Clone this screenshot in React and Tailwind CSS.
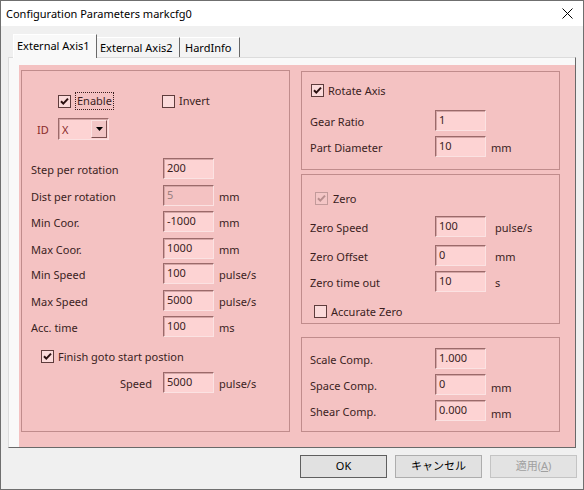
import React from "react";

const TXT = "text-[#3b1e1e]";

function Check({ checked, disabled }) {
  return (
    <span
      className={
        disabled
          ? "w-[13px] h-[13px] shrink-0 border border-[#c29a9a] bg-[#f4c6c6] flex items-center justify-center"
          : "w-[13px] h-[13px] shrink-0 border border-[#5e3c3c] bg-[#fbdada] flex items-center justify-center"
      }
    >
      {checked && (
        <svg width="11" height="11" viewBox="0 0 11 11">
          <path
            d="M2 5.2 L4.3 7.6 L9 2.6"
            stroke={disabled ? "#b88e8e" : "#2a1010"}
            strokeWidth="2"
            fill="none"
          />
        </svg>
      )}
    </span>
  );
}

function Field({ value, disabled }) {
  return (
    <div
      className={
        disabled
          ? "w-[51px] h-[21px] shrink-0 flex items-center pl-[3px] border border-t-[#9b6a6a] border-l-[#9b6a6a] border-r-[#fbe2e2] border-b-[#fbe2e2] shadow-[inset_1px_1px_0_#d4a5a5] bg-[#f4c2c2] text-[#9a7f7f]"
          : "w-[51px] h-[21px] shrink-0 flex items-center pl-[3px] border border-t-[#9b6a6a] border-l-[#9b6a6a] border-r-[#fbe2e2] border-b-[#fbe2e2] shadow-[inset_1px_1px_0_#d4a5a5] bg-[#fdd3d3] text-[#3b1e1e]"
      }
    >
      {value}
    </div>
  );
}

function Row({ label, value, unit, disabled, rowCls, labelCls, unitCls }) {
  return (
    <div className={rowCls}>
      <span className={labelCls}>{label}</span>
      <Field value={value} disabled={disabled} />
      {unit && <span className={unitCls}>{unit}</span>}
    </div>
  );
}

export default function App() {
  const leftRow = "flex items-center h-[21px] pl-[9px]";
  const leftLabel = "w-[132px] shrink-0 pt-[3px]";
  const leftUnit = "ml-[5px] pt-[3px]";
  const rightRow = "flex items-center h-[21px] pl-[8px]";
  const rightLabel = "w-[125px] shrink-0 pt-[3px]";
  return (
    <div className="w-[584px] h-[490px] border border-[#6f6f6f] bg-[#f0f0f0] flex flex-col overflow-hidden text-[11px] text-black font-['Noto_Sans','Noto_Sans_CJK_JP',sans-serif]">
      {/* Title bar */}
      <div className="h-[25px] shrink-0 bg-white flex items-center pl-[5px]">
        <span className="text-[11px] leading-none">Configuration Parameters markcfg0</span>
        <svg className="ml-auto mr-[10px]" width="11" height="11" viewBox="0 0 11 11">
          <path d="M0.5 0.5 L10.5 10.5 M10.5 0.5 L0.5 10.5" stroke="#000" strokeWidth="1" />
        </svg>
      </div>

      {/* Tab strip */}
      <div className="h-[31px] shrink-0 flex items-end pl-[12px] relative z-10">
        <div className="w-[84px] h-[24px] -mb-[1px] bg-[#f9f9f9] border-l border-t border-r border-l-white border-t-white border-r-[#696969] flex items-start pt-[5px] pl-[3px]">
          <span className="leading-none">External Axis1</span>
        </div>
        <div className="w-[83px] h-[20px] bg-[#f4f4f4] border-t border-r border-t-white border-r-[#696969] flex items-start pt-[4px] pl-[3px]">
          <span className="leading-none">External Axis2</span>
        </div>
        <div className="w-[60px] h-[20px] bg-[#f4f4f4] border-t border-r border-t-white border-r-[#696969] flex items-start pt-[4px] pl-[5px]">
          <span className="leading-none">HardInfo</span>
        </div>
      </div>

      {/* Tab panel */}
      <div className="ml-[7px] w-[568px] h-[391px] shrink-0 bg-[#f9f9f9] border border-t-[#dcdcdc] border-l-[#dcdcdc] border-r-[#696969] border-b-[#696969] pt-[7px] pl-[10px]">
        <div className={`w-[556px] h-[382px] bg-[#f4c2c2] flex items-start pt-[5px] pl-[2px] ${TXT}`}>
          {/* Left group */}
          <div className="w-[269px] h-[362px] shrink-0 border border-[#c08c8c] flex flex-col">
            <div className="mt-[20px] h-[20px] flex items-center pl-[36px]">
              <div className="w-[104px] shrink-0 flex items-center">
                <Check checked />
                <span className="ml-[4px] h-[18px] px-[1px] border border-dotted border-[#3b1e1e] flex items-center">
                  Enable
                </span>
              </div>
              <Check />
              <span className="ml-[4px]">Invert</span>
            </div>
            <div className="mt-[7px] h-[22px] flex items-center pl-[15px]">
              <span className="w-[21px] shrink-0 text-[#8a2a2a] pt-[3px]">ID</span>
              <div className="w-[51px] h-[22px] flex items-center border border-t-[#9b6a6a] border-l-[#9b6a6a] border-r-[#fbe2e2] border-b-[#fbe2e2] shadow-[inset_1px_1px_0_#d4a5a5] bg-[#fdd3d3] pl-[3px]">
                <span className="flex-1 text-[#8a2a2a] leading-none">X</span>
                <div className="w-[16px] h-[18px] mr-[1px] border border-t-[#fbe2e2] border-l-[#fbe2e2] border-r-[#7a5050] border-b-[#7a5050] bg-[#f2c6c6] flex items-center justify-center">
                  <svg width="7" height="4" viewBox="0 0 7 4">
                    <path d="M0 0 H7 L3.5 4 Z" fill="#000" />
                  </svg>
                </div>
              </div>
            </div>
            <div className="mt-[18px] flex flex-col">
              <Row label="Step per rotation" value="200" rowCls={leftRow} labelCls={leftLabel} unitCls={leftUnit} />
              <div className="mt-[6px]">
                <Row label="Dist per rotation" value="5" unit="mm" disabled rowCls={leftRow} labelCls={leftLabel} unitCls={leftUnit} />
              </div>
              <div className="mt-[5px]">
                <Row label="Min Coor." value="-1000" unit="mm" rowCls={leftRow} labelCls={leftLabel} unitCls={leftUnit} />
              </div>
              <div className="mt-[6px]">
                <Row label="Max Coor." value="1000" unit="mm" rowCls={leftRow} labelCls={leftLabel} unitCls={leftUnit} />
              </div>
              <div className="mt-[4px]">
                <Row label="Min Speed" value="100" unit="pulse/s" rowCls={leftRow} labelCls={leftLabel} unitCls={leftUnit} />
              </div>
              <div className="mt-[6px]">
                <Row label="Max Speed" value="5000" unit="pulse/s" rowCls={leftRow} labelCls={leftLabel} unitCls={leftUnit} />
              </div>
              <div className="mt-[5px]">
                <Row label="Acc. time" value="100" unit="ms" rowCls={leftRow} labelCls={leftLabel} unitCls={leftUnit} />
              </div>
            </div>
            <div className="mt-[9px] h-[20px] flex items-center pl-[19px]">
              <Check checked />
              <span className="ml-[4px] pt-[2px]">Finish goto start postion</span>
            </div>
            <div className="mt-[6px]">
              <Row label="Speed" value="5000" unit="pulse/s" rowCls={leftRow} labelCls="w-[132px] shrink-0 text-right pr-[11px] pt-[3px]" unitCls={leftUnit} />
            </div>
          </div>

          {/* Right column */}
          <div className="ml-[11px] mt-[1px] w-[259px] shrink-0 flex flex-col">
            <div className="h-[99px] border border-[#c08c8c] flex flex-col">
              <div className="mt-[8px] h-[20px] flex items-center pl-[9px]">
                <Check checked />
                <span className="ml-[4px] pt-[2px]">Rotate Axis</span>
              </div>
              <div className="mt-[10px] flex flex-col gap-[5px]">
                <Row label="Gear Ratio" value="1" rowCls={rightRow} labelCls={rightLabel} unitCls="ml-[5px]" />
                <Row label="Part Diameter" value="10" unit="mm" rowCls={rightRow} labelCls={rightLabel} unitCls="ml-[5px] pt-[3px]" />
              </div>
            </div>

            <div className="mt-[4px] h-[150px] border border-[#c08c8c] flex flex-col">
              <div className="mt-[13px] h-[20px] flex items-center pl-[13px]">
                <Check checked disabled />
                <span className="ml-[5px] pt-[2px]">Zero</span>
              </div>
              <div className="mt-[8px]">
                <Row label="Zero Speed" value="100" unit="pulse/s" rowCls={rightRow} labelCls={rightLabel} unitCls="ml-[9px] pt-[3px]" />
              </div>
              <div className="mt-[8px]">
                <Row label="Zero Offset" value="0" unit="mm" rowCls={rightRow} labelCls={rightLabel} unitCls="ml-[9px] pt-[3px]" />
              </div>
              <div className="mt-[5px]">
                <Row label="Zero time out" value="10" unit="s" rowCls={rightRow} labelCls={rightLabel} unitCls="ml-[9px] pt-[3px]" />
              </div>
              <div className="mt-[9px] h-[20px] flex items-center pl-[12px]">
                <Check />
                <span className="ml-[4px] pt-[2px]">Accurate Zero</span>
              </div>
            </div>

            <div className="mt-[13px] h-[95px] border border-[#c08c8c] flex flex-col">
              <div className="mt-[10px] flex flex-col gap-[5px]">
                <Row label="Scale Comp." value="1.000" rowCls={rightRow} labelCls={rightLabel} unitCls="ml-[5px]" />
                <Row label="Space Comp." value="0" unit="mm" rowCls={rightRow} labelCls={rightLabel} unitCls="ml-[5px] pt-[7px]" />
                <Row label="Shear Comp." value="0.000" unit="mm" rowCls={rightRow} labelCls={rightLabel} unitCls="ml-[5px] pt-[7px]" />
              </div>
            </div>
          </div>
        </div>
      </div>

      {/* Buttons */}
      <div className="mt-[7px] flex justify-end gap-[8px] pr-[6px]">
        <div className="w-[87px] h-[23px] bg-[#e1e1e1] border border-[#5f5f5f] flex items-center justify-center">
          OK
        </div>
        <div className="w-[87px] h-[23px] bg-[#e1e1e1] border border-[#adadad] flex items-center justify-center">
          キャンセル
        </div>
        <div className="w-[87px] h-[23px] bg-[#e3e3e3] border border-[#c4c4c4] flex items-center justify-center text-[#a0a0a0]">
          適用(<span className="underline">A</span>)
        </div>
      </div>
    </div>
  );
}
